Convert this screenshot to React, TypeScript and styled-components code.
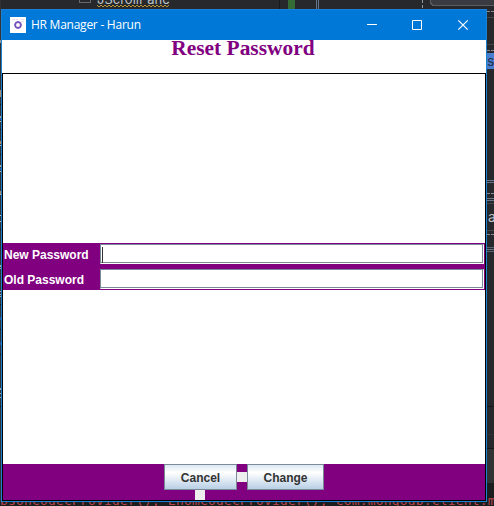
import React from "react";
import styled, { createGlobalStyle } from "styled-components";

const GlobalStyle = createGlobalStyle`
  * { box-sizing: border-box; }
  body { margin: 0; overflow: hidden; background: #26282b; }
`;

const Desktop = styled.main`
  position: relative;
  width: 494px;
  height: 506px;
  padding: 9px 7px 4px 1px;
  overflow: hidden;
  background: #26282b;
`;

const EditorWindow = styled.div`
  position: absolute;
  inset: 0;
  display: flex;
  flex-direction: column;
  justify-content: space-between;
  color: #bfc2c7;
`;

const EditorMarks = styled.svg`
  position: absolute;
  inset: 0;
  shape-rendering: crispEdges;
`;

const TreeItem = styled.span`
  position: relative;
  height: 15px;
  margin: -8px 0 0 97px;
  font: 13px/15px Inter, "Open Sans", sans-serif;
`;

const EdgeText = styled.div`
  position: relative;
  display: flex;
  flex: 1;
  flex-direction: column;
  align-items: flex-end;
  padding-top: 46px;
  gap: 140px;
  font: 14px/16px Inter, "Open Sans", sans-serif;
`;

const EdgeLetter = styled.span<{ $selected?: boolean }>`
  width: 7px;
  height: 16px;
  padding-left: ${(p) => (p.$selected ? 0 : 1)}px;
  color: ${(p) => (p.$selected ? "#273045" : "#bfc2c7")};
  background: ${(p) => (p.$selected ? "#477ed2" : "transparent")};
  overflow: visible;
`;

const CodeLine = styled.code`
  position: relative;
  margin-bottom: -2px;
  color: #b8444a;
  font: 13px/15px "DejaVu Sans Mono", monospace;
  letter-spacing: 0.17px;
  white-space: pre;
`;

const Window = styled.section`
  position: relative;
  display: flex;
  flex-direction: column;
  width: 486px;
  height: 493px;
  border: 1px solid #1b82d2;
  border-top-color: #1880dc;
  background: #fff;
`;

const TitleBar = styled.header`
  display: flex;
  align-items: center;
  flex: 0 0 30px;
  padding-left: 8px;
  background: #0078d7;
  color: #fff;
`;

const AppIcon = styled.svg`
  display: block;
  width: 16px;
  height: 16px;
  margin-right: 5px;
`;

const WindowTitle = styled.span`
  flex: 1;
  font: 12px/16px "Open Sans", "Noto Sans", sans-serif;
  letter-spacing: -0.25px;
`;

const Controls = styled.div`
  display: flex;
  height: 30px;
`;

const ControlButton = styled.button`
  width: 46px;
  padding: 0;
  border: 0;
  background: none;
  svg { display: block; margin: 0 auto; overflow: visible; }
`;

const Heading = styled.h1`
  flex: 0 0 33px;
  margin: 0;
  padding-right: 2px;
  color: #800080;
  font: bold 20px/16px "Liberation Serif", serif;
  text-align: center;
  span { display: inline-block; transform: scaleX(1.07); }
`;

const Content = styled.div`
  display: flex;
  flex: 1;
  flex-direction: column;
  border: 1px solid #000;
`;

const Space = styled.div<{ $height: number }>`
  flex: 0 0 ${(p) => p.$height}px;
`;

const Form = styled.form`
  display: grid;
  grid-template-columns: 97px 384px;
  grid-template-rows: 20px 20px;
  row-gap: 5px;
  height: 47px;
  padding: 1px 1px 1px 0;
  background: #800080;
`;

const Label = styled.label`
  padding: 1px 0 0 1px;
  color: #fff;
  font: bold 12px/20px "Liberation Sans", Arial, sans-serif;
  white-space: nowrap;
`;

const Field = styled.div`
  display: flex;
  padding: 2px;
  background: #fff;
  border: 1px solid #7a8a99;
  border-right-color: #fff;
  border-bottom-color: #fff;
  box-shadow: inset -1px -1px #7a8a99, inset 1px 1px #fff;
`;

const Caret = styled.i`
  width: 1px;
  height: 16px;
  margin-left: -1px;
  background: #333;
`;

const Footer = styled.footer`
  display: grid;
  grid-template-columns: 73px 10px 77px;
  grid-template-rows: 26px 10px;
  height: 36px;
  padding-left: 161px;
  background: #800080;
`;

const Button = styled.button`
  padding: 2px 0 0;
  border: 1px solid #7a8a99;
  color: #333;
  background: linear-gradient(#dde8f3 0%, #fff 32%, #eff4f9 48%, #b8cfe5 100%);
  font: bold 12px/20px "Liberation Sans", Arial, sans-serif;
`;

const Gap = styled.i<{ $below?: boolean }>`
  width: 10px;
  height: 10px;
  align-self: center;
  justify-self: center;
  margin-left: ${(p) => (p.$below ? -1 : 0)}px;
  background: #eee;
`;

const leftMarks: [number, number, string][] = [
  [40, 3, "#91999f"], [90, 7, "#b08a67"], [104, 1, "#111"], [116, 2, "#b3a28f"],
  [118, 2, "#2256a5"], [121, 1, "#c4b693"], [129, 1, "#111"], [141, 3, "#b2845b"], [145, 1, "#a9b1bd"],
  [154, 1, "#111"], [165, 2, "#b3a28f"], [168, 2, "#2256a5"], [171, 1, "#c4b693"], [191, 3, "#b2845b"],
  [194, 1, "#a9b1bd"], [215, 1, "#b3bdc9"], [221, 1, "#b3bdc9"], [229, 1, "#111"], [265, 2, "#a6a8ac"],
  [268, 1, "#a6a8ac"], [291, 1, "#aaa"], [294, 1, "#aaa"], [296, 1, "#aaa"], [304, 1, "#111"],
  [317, 3, "#26549c"], [329, 1, "#111"], [342, 3, "#26549c"], [354, 1, "#111"], [388, 2, "#a0a5ac"],
  [393, 1, "#a0a5ac"], [397, 1, "#a0a5ac"], [406, 1, "#111"],
];

const rightMarks: [number, string][] = [
  [17, "#424448"], [44, "#424448"], [180, "#67758a"], [182, "#67758a"], [198, "#67758a"],
  [200, "#67758a"], [203, "#424448"], [230, "#424448"], [247, "#596372"], [249, "#67758a"],
  [251, "#596372"], [406, "#151719"], [434, "#303234"], [448, "#151719"],
];

function Editor() {
  return (
    <EditorWindow>
      <EditorMarks width="494" height="506" fill="none">
        <path d="M0 0h1v506H0z" fill="#303238" />
        <path d="M79.5 0v2.5h11V0" stroke="#66696e" />
        <path d="M279 0h1v9h-1z" fill="#17191b" />
        <path d="M288 0h7v9h-7z" fill="#356b34" />
        <path d="M316.5 0v9M318.5 0v9" stroke="#67758a" />
        <path d="M422.5 0v9" stroke="#929aa5" strokeDasharray="3 2" />
        <path d="M430 0h64v6h-62l-2-2z" fill="#5b5d61" />
        <path d="M431 0h63v5h-61l-2-2z" fill="#393b40" />
        <path d="M487 449h7v34h-7z" fill="#303234" />
        <path d="M487 483h7v23h-7zM0 502h494v4H0z" fill="#1b1d1f" />
        <path d="M487 11.5h7m-7 39h7m-7 143h7m-7 41h7" stroke="#858c96" strokeDasharray="3 1" />
        {leftMarks.map(([y, h, color]) => <rect key={y} y={y} width="1" height={h} fill={color} />)}
        {rightMarks.map(([y, color]) => <rect key={y} x="487" y={y} width="7" height="1" fill={color} />)}
        <path d={"M97 5" + " l2 2 l2 -2".repeat(18)} stroke="#bb9637" shapeRendering="auto" />
      </EditorMarks>
      <TreeItem>JScrollPane</TreeItem>
      <EdgeText>
        <EdgeLetter $selected>s</EdgeLetter>
        <EdgeLetter>a</EdgeLetter>
      </EdgeText>
      <CodeLine>bsonCodecProvider(), EnomCodecProvider(), com.mongodb.client.m</CodeLine>
    </EditorWindow>
  );
}

export default function App() {
  return (
    <>
      <GlobalStyle />
      <Desktop>
        <Editor />
        <Window>
          <TitleBar>
            <AppIcon viewBox="0 0 16 16">
              <path fill="#fff" d="M0 0h16v16H0z" />
              <path d="M2 2.5h3m1 0h2m2 0h4M11 4.5h3" stroke="#e4dfeb" />
              <circle cx="8" cy="8" r="2.8" fill="#fff" stroke="#7652bd" strokeWidth="1.7" />
              <path d="M8 4v1.2m0 5.6V12M4 8h1.2m5.6 0H12" stroke="#7652bd" strokeWidth="1.2" />
            </AppIcon>
            <WindowTitle>HR Manager - Harun</WindowTitle>
            <Controls>
              <ControlButton aria-label="Minimize"><svg width="10" height="10"><path d="M1 4.5h10" stroke="#fff" /></svg></ControlButton>
              <ControlButton aria-label="Maximize"><svg width="10" height="10"><path d="M.5.5h9v9h-9z" stroke="#fff" fill="none" /></svg></ControlButton>
              <ControlButton aria-label="Close"><svg width="10" height="10"><path d="m.3.3 9.4 9.4m0-9.4L.3 9.7" stroke="#fff" strokeWidth="1.2" /></svg></ControlButton>
            </Controls>
          </TitleBar>
          <Heading><span>Reset Password</span></Heading>
          <Content>
            <Space $height={169} />
            <Form>
              <Label>New Password</Label>
              <Field><Caret /></Field>
              <Label>Old Password</Label>
              <Field />
            </Form>
            <Space $height={174} />
            <Footer>
              <Button type="button">Cancel</Button>
              <Gap />
              <Button type="button">Change</Button>
              <Gap $below />
            </Footer>
          </Content>
        </Window>
      </Desktop>
    </>
  );
}
